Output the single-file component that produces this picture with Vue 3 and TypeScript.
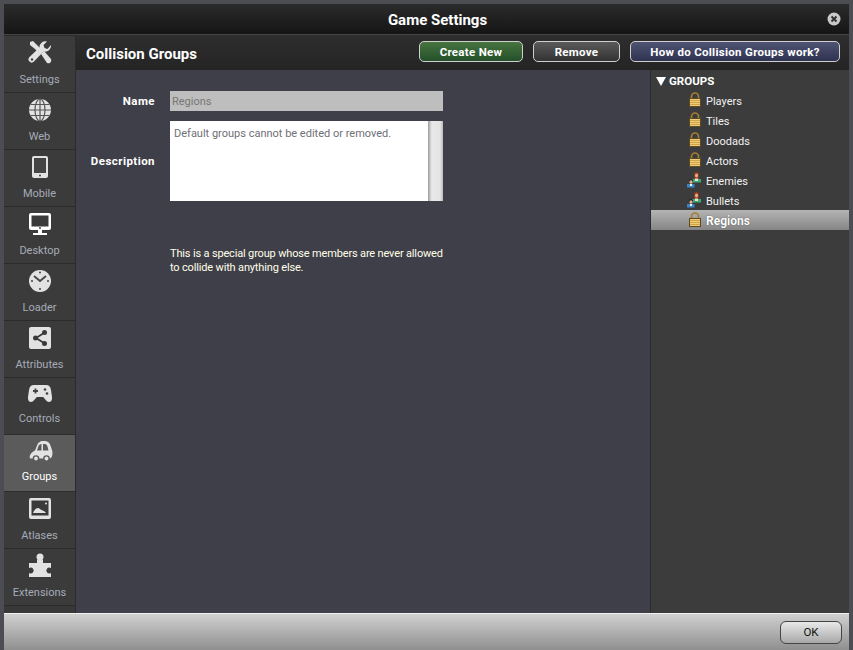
<script setup lang="ts">
const nav = [
  { label: 'Settings', icon: 'wrench' },
  { label: 'Web', icon: 'globe' },
  { label: 'Mobile', icon: 'tablet' },
  { label: 'Desktop', icon: 'desktop' },
  { label: 'Loader', icon: 'clock' },
  { label: 'Attributes', icon: 'share' },
  { label: 'Controls', icon: 'pad' },
  { label: 'Groups', icon: 'car', active: true },
  { label: 'Atlases', icon: 'image' },
  { label: 'Extensions', icon: 'puzzle' },
]
const groups = [
  { name: 'Players', icon: 'lock' },
  { name: 'Tiles', icon: 'lock' },
  { name: 'Doodads', icon: 'lock' },
  { name: 'Actors', icon: 'lock' },
  { name: 'Enemies', icon: 'people' },
  { name: 'Bullets', icon: 'people' },
  { name: 'Regions', icon: 'lock', selected: true },
]
</script>

<template>
  <div class="win">
    <header class="title">
      <span class="title-text">Game Settings</span>
      <svg class="close" width="14" height="14" viewBox="0 0 14 14">
        <circle cx="7" cy="7" r="6.500" fill="#c9c9c9" />
        <path d="M4.500 4.500l5 5M9.500 4.500l-5 5" stroke="#333" stroke-width="2" />
      </svg>
    </header>
    <div class="main">
      <nav class="side">
        <div v-for="n in nav" :key="n.label" class="nav" :class="{ active: n.active }">
          <svg class="ico" :class="n.icon" width="28" height="28" viewBox="0 0 28 28" fill="#e2e2e2">
            <template v-if="n.icon === 'wrench'">
              <path d="M4 3l3-1 5 5 3 3-3 3-3-3-5-4z" />
              <path d="M25 6a6 6 0 0 1-7.500 6.500L8 22.500a3 3 0 0 1-4.500-4.500L13.500 8.500A6 6 0 0 1 21 2.500l-3.500 3.500 1 3 3 1z" />
              <path d="M15 15l3-3 7 8a3 3 0 0 1-4 4z" />
              <circle cx="6" cy="20.500" r="1.200" fill="#444" />
            </template>
            <template v-else-if="n.icon === 'globe'">
              <circle cx="14" cy="14" r="11" />
              <g fill="none" stroke="#555" stroke-width="1.200">
                <ellipse cx="14" cy="14" rx="5" ry="11" />
                <path d="M14 3v22M3 14h22M4.500 8.500h19M4.500 19.500h19" />
              </g>
            </template>
            <template v-else-if="n.icon === 'tablet'">
              <rect x="6" y="3" width="16" height="22" rx="2" />
              <rect x="8" y="5" width="12" height="15" fill="#444" />
              <circle cx="14" cy="22.500" r="1" fill="#444" />
            </template>
            <template v-else-if="n.icon === 'desktop'">
              <rect x="3" y="3" width="22" height="17" rx="2" fill="#fff" />
              <rect x="5.500" y="5.500" width="17" height="11" fill="#3a3a3a" />
              <path d="M12 20h4v3h5v2H7v-2h5z" fill="#fff" />
              <circle cx="14" cy="18" r=".9" fill="#333" />
            </template>
            <template v-else-if="n.icon === 'clock'">
              <circle cx="14" cy="14" r="11" />
              <path d="M8 9l6 5 6-5" fill="none" stroke="#444" stroke-width="1.800" />
              <circle cx="14" cy="5.500" r="1" fill="#444" />
              <circle cx="14" cy="22" r="1" fill="#444" />
              <circle cx="6" cy="14" r="1" fill="#444" />
              <circle cx="22" cy="14" r="1" fill="#444" />
            </template>
            <template v-else-if="n.icon === 'share'">
              <rect x="3" y="3" width="22" height="22" rx="2" />
              <path d="M18 9l-8 5 8 5" fill="none" stroke="#3a3a3a" stroke-width="1.800" />
              <circle cx="18.500" cy="8.500" r="2.500" fill="#3a3a3a" />
              <circle cx="18.500" cy="19.500" r="2.500" fill="#3a3a3a" />
              <circle cx="9.500" cy="14" r="2.500" fill="#3a3a3a" />
            </template>
            <template v-else-if="n.icon === 'pad'">
              <path d="M8 6h12c3 0 4.500 1.500 5 5l1 7c.4 3-1 5-3 5-2.500 0-3.500-3-6-5h-6c-2.500 2-3.500 5-6 5-2 0-3.400-2-3-5l1-7c.5-3.500 2-5 5-5z" />
              <path d="M7 12h5M9.500 9.500v5" stroke="#444" stroke-width="1.800" />
              <circle cx="19" cy="10.500" r="1.300" fill="#444" />
              <circle cx="21" cy="14.500" r="1.300" fill="#444" />
            </template>
            <template v-else-if="n.icon === 'car'">
              <path d="M4 20.500c-1-3 1-6 5-8l2-5c1-3 3-4.500 6-4.500h2c3 0 5 2 6 6l1 3c1 3 .5 7.500-2 8.500H5z" />
              <path d="M11 12.500l1.500-4.500c.4-1 1.500-2 3-2v6.500zM17 6h2c1.200 0 2 1 2.500 2.500l1 4H17z" fill="#5a5a5a" />
              <circle cx="10" cy="20.500" r="3.300" fill="#5a5a5a" />
              <circle cx="10" cy="20.500" r="1.900" />
              <circle cx="20.500" cy="20.500" r="3.300" fill="#5a5a5a" />
              <circle cx="20.500" cy="20.500" r="1.900" />
            </template>
            <template v-else-if="n.icon === 'image'">
              <rect x="3" y="3" width="22" height="21" rx="2" />
              <rect x="5.500" y="5.500" width="17" height="15" fill="#3a3a3a" />
              <path d="M7 18c1-3 3-5 5-5 1.500 0 2 1.500 3.500 2 1.500.5 3 1 4.500 3z" fill="#e2e2e2" />
              <circle cx="20" cy="8.500" r="1" fill="#e2e2e2" />
            </template>
            <template v-else>
              <circle cx="14" cy="5" r="3.500" />
              <path d="M11 8h6v3h8v5a3 3 0 1 0 0 5v4H3v-4a3 3 0 1 0 0-5v-5h8z" />
            </template>
          </svg>
          <span class="nav-label">{{ n.label }}</span>
        </div>
      </nav>
      <section class="content">
        <div class="head">
          <h1>Collision Groups</h1>
          <div class="actions">
            <button class="btn green">Create New</button>
            <button class="btn grey">Remove</button>
            <button class="btn blue">How do Collision Groups work?</button>
          </div>
        </div>
        <div class="body">
          <div class="form">
            <div class="row name-row">
              <label>Name</label>
              <div class="input">Regions</div>
            </div>
            <div class="row desc-row">
              <label>Description</label>
              <div class="textarea">
                <div class="ta-text">Default groups cannot be edited or removed.</div>
                <div class="scroll"></div>
              </div>
            </div>
            <p class="note">This is a special group whose members are never allowed to collide with anything else.</p>
          </div>
          <aside class="tree">
            <div class="tree-head"><span class="tri"></span>GROUPS</div>
            <div v-for="g in groups" :key="g.name" class="leaf" :class="{ sel: g.selected }">
              <svg v-if="g.icon === 'lock'" class="leaf-ico" width="16" height="16" viewBox="0 0 16 16">
                <path d="M4.500 8V4.500a3.500 3.500 0 0 1 7 0V8" fill="none" stroke="#a5802f" stroke-width="1.700" />
                <rect x="2.500" y="6.500" width="11" height="8" fill="#efcb74" stroke="#5e4a24" />
                <path d="M3 8.500h10M3 10.500h10M3 12.500h10" stroke="#cfa44a" />
              </svg>
              <svg v-else class="leaf-ico" width="16" height="16" viewBox="0 0 16 16">
                <path d="M7 1.500c0-1 1-1.500 2.500-1.500s2.500.5 2.500 1.500V7H7z" fill="#8a3a1e" />
                <ellipse cx="9.500" cy="3.500" rx="1.500" ry="2" fill="#e6b090" />
                <path d="M5 7h9v3.500H5z" fill="#3fa878" />
                <path d="M8 6.500h3V9H8z" fill="#e9e2c8" />
                <path d="M2 7.500h4v2.500H2z" fill="#1e1e1e" />
                <ellipse cx="4" cy="10" rx="1.600" ry="1.800" fill="#e6b090" />
                <path d="M0 12h7.500v3.500H0z" fill="#3a86cc" />
                <path d="M3 12h2v2H3z" fill="#eaf2f8" />
              </svg>
              <span>{{ g.name }}</span>
            </div>
          </aside>
        </div>
      </section>
    </div>
    <footer class="foot">
      <button class="ok">OK</button>
    </footer>
  </div>
</template>

<style>
html, body { margin: 0; padding: 0; background: #4b4b52; }
</style>

<style scoped>
* { box-sizing: border-box; }
.win {
  width: 853px; height: 650px; background: #4c4c53; padding: 4px 4px 0;
  display: flex; flex-direction: column; overflow: hidden;
  font-family: Roboto, sans-serif; font-size: 11px; color: #fff;
}
.title {
  height: 31px; flex: none; position: relative; padding: 2px 0 0 22px;
  background: linear-gradient(#2b2b2b, #151515);
  display: flex; align-items: center; justify-content: center;
  border-bottom: 1px solid #444;
}
.title-text { font-weight: 700; font-size: 15px; }
.close { position: absolute; right: 8px; top: 8px; }
.main { flex: 1; display: flex; min-height: 0; }
.side {
  width: 72px; flex: none; background: #383838; border-right: 1px solid #2b2b2b;
  border-top: 1px solid #2a2a2a;
}
.nav {
  height: 57px; border-bottom: 1px solid #2b2b2b; display: flex; flex-direction: column;
  align-items: center; padding-top: 1px; background: #3b3b3b;
}
.nav.active { background: #5b5b5b; }
.ico { display: block; width: 28px; height: 28px; margin-top: 2px; }
.ico.pad { margin-top: 0; margin-bottom: -1px; }
.ico.car { margin-bottom: -2px; }
.nav-label {
  margin-top: 6px; color: #a6abb8; font-size: 11px; line-height: 14px;
}
.nav.active .nav-label { color: #fff; }
.content { flex: 1; display: flex; flex-direction: column; min-width: 0; }
.head {
  height: 35px; flex: none; display: flex; align-items: center; justify-content: space-between;
  padding: 0 9px 2px 10px; background: linear-gradient(#2e2e2e, #242424);
}
h1 { margin: 5px 0 0; font-size: 15px; font-weight: 700; }
.actions { display: flex; gap: 10px; }
.btn {
  height: 21px; border: 1px solid #cfcfcf; border-radius: 5px; color: #fff; font: 700 11.500px Roboto, sans-serif;
  padding: 0; letter-spacing: .3px;
}
.green { width: 104px; background: linear-gradient(#47743f, #24502a); }
.grey { width: 87px; background: linear-gradient(#5a5a5a, #333); }
.blue { width: 210px; background: linear-gradient(#4e5472, #2f3250); }
.body { flex: 1; display: flex; min-height: 0; }
.form { flex: 1; background: #3f3f49; padding: 21px 0 0; }
.row { display: flex; align-items: center; }
.row label {
  width: 79px; text-align: right; font: 700 11.500px Roboto, sans-serif; letter-spacing: .45px; margin-right: 15px; flex: none;
}
.input {
  width: 273px; height: 20px; background: #bebebe; color: #777; padding: 1px 2px 0; line-height: 20px;
  font-size: 11px;
}
.desc-row { margin-top: 10px; }
.textarea {
  width: 273px; height: 80px; background: #fff; display: flex; justify-content: space-between;
}
.ta-text { color: #6f6f77; padding: 6px 4px; font: 11px Roboto, sans-serif; }
.scroll { width: 15px; background: linear-gradient(90deg, #9c9c9c, #e8e8e8 25%, #e4e4e4 80%, #bbb); }
.note {
  margin: 46px 0 0 94px; width: 276px; font: 11px/14px Roboto, sans-serif; letter-spacing: -.16px; color: #ffffe8;
}
.tree { width: 199px; flex: none; background: #3c3c3c; border-left: 1px solid #2c2c2c; padding-top: 2px; }
.tree-head { height: 18px; display: flex; align-items: center; padding-left: 5px; font: 700 11.500px Roboto, sans-serif; }
.tri { width: 0; height: 0; border: 5px solid transparent; border-top: 9px solid #fff; border-bottom: 0; margin-right: 3px; }
.leaf { height: 20px; display: flex; align-items: center; padding: 2px 0 0 36px; font: 11px Roboto, sans-serif; color: #f2f2f2; }
.leaf-ico { margin-right: 3px; flex: none; margin-top: -2px; }
.leaf.sel { padding-top: 1px; background: linear-gradient(#b4b4b4, #858585); font-size: 12px; font-weight: 700; color: #fff; text-shadow: 0 0 1px #333; }
.foot {
  height: 37px; flex: none; background: linear-gradient(#d0d0d0, #8f8f8f);
  border-top: 1px solid #f0f0f0; display: flex; align-items: center; justify-content: flex-end; padding: 0 7px 0 0;
}
.ok {
  width: 62px; height: 23px; border: 1px solid #444; border-radius: 6px; background: linear-gradient(#e8e8e8, #a8a8a8);
  color: #111; font: 11.500px Roboto, sans-serif; padding: 0;
}
</style>
